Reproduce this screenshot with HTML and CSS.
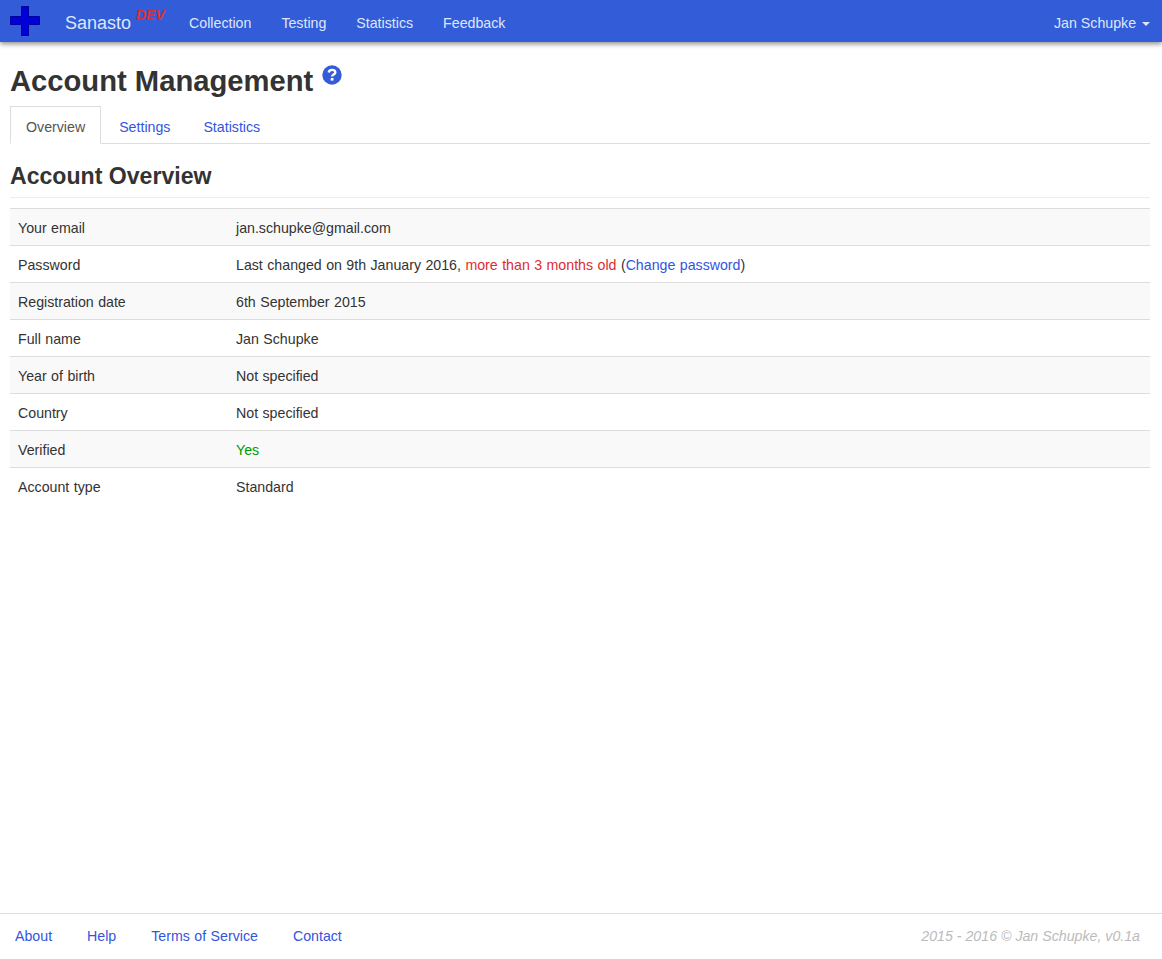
FILE: index.html
```html
<!DOCTYPE html>
<html lang="en">

<head>
    <meta charset="UTF-8">
    <meta name="viewport" content="width=device-width, initial-scale=1.0">
    <title>Account Management</title>
    <link rel="stylesheet" href="styles.css">
</head>

<body>

    <nav class="navbar">
        <a class="logo" href="#">
            <svg width="30" height="30" viewBox="0 0 30 30">
                <path d="M11.500 .5h7v10h11v8h-11v11h-7v-11h-11v-8h11z" fill="#0000d8" stroke="#00009a"/>
            </svg>
        </a>
        <a class="brand" href="#">Sanasto<sup class="dev">DEV</sup></a>
        <ul class="nav-links">
            <li><a href="#">Collection</a></li>
            <li><a href="#">Testing</a></li>
            <li><a href="#">Statistics</a></li>
            <li><a href="#">Feedback</a></li>
        </ul>
        <a class="user" href="#">Jan Schupke <span class="caret"></span></a>
    </nav>

    <main class="content">
        <h1>Account Management
            <a class="help" href="#">
                <svg width="20" height="20" viewBox="0 0 20 20">
                    <circle cx="10" cy="10" r="9.700" fill="#335cd8"/>
                    <path d="M6.700 7.500c.2-1.700 1.500-2.600 3.300-2.600 1.900 0 3.300 1 3.300 2.500 0 2.200-3.200 2.200-3.200 4.200" fill="none" stroke="#fff" stroke-width="2.400"/>
                    <rect x="8.700" y="13" width="2.800" height="2.600" fill="#fff"/>
                </svg>
            </a>
        </h1>

        <ul class="tabs">
            <li class="active"><a href="#">Overview</a></li>
            <li><a href="#">Settings</a></li>
            <li><a href="#">Statistics</a></li>
        </ul>

        <h2>Account Overview</h2>

        <table class="info">
            <tr><td>Your email</td><td>jan.schupke@gmail.com</td></tr>
            <tr><td>Password</td><td>Last changed on 9th January 2016, <span class="old">more than 3 months old</span> (<a href="#">Change password</a>)</td></tr>
            <tr><td>Registration date</td><td>6th September 2015</td></tr>
            <tr><td>Full name</td><td>Jan Schupke</td></tr>
            <tr><td>Year of birth</td><td>Not specified</td></tr>
            <tr><td>Country</td><td>Not specified</td></tr>
            <tr><td>Verified</td><td><span class="yes">Yes</span></td></tr>
            <tr><td>Account type</td><td>Standard</td></tr>
        </table>
    </main>

    <footer>
        <ul class="foot-links">
            <li><a href="#">About</a></li>
            <li><a href="#">Help</a></li>
            <li><a href="#">Terms of Service</a></li>
            <li><a href="#">Contact</a></li>
        </ul>
        <p class="copy">2015 - 2016 © Jan Schupke, v0.1a</p>
    </footer>

</body>
</html>
```

FILE: styles.css
```css
:root {
    --blue: #335cd8;
    --link: #3355dd;
    --text: #333333;
    --border: #dddddd;
}

* {
    box-sizing: border-box;
    margin: 0;
    padding: 0;
}

html, body {
    height: 100%;
}

body {
    display: flex;
    flex-direction: column;
    background: #fff;
    color: var(--text);
    font-family: "Liberation Sans", sans-serif;
    font-size: 14.2px;
    line-height: 20px;
}

a {
    color: var(--link);
    text-decoration: none;
}

ul {
    list-style: none;
}

/* Navbar */
.navbar {
    display: flex;
    align-items: center;
    flex: none;
    height: 42px;
    padding-left: 10px;
    padding-top: 3px;
    background: var(--blue);
    box-shadow: 0 2px 5px rgba(0, 0, 0, 0.45);
}

.navbar a {
    color: #dfe6fa;
}

.logo {
    display: flex;
    align-self: flex-start;
    width: 30px;
    height: 30px;
    margin-top: 3px;
}

.brand {
    margin-left: 25px;
    font-size: 18px;
    position: relative;
}

.dev {
    position: absolute;
    top: -8px;
    left: 71px;
    color: #dd2c33;
    font-size: 14px;
    font-weight: 700;
    font-style: italic;
    line-height: 20px;
}

.nav-links {
    display: flex;
    gap: 30px;
    margin-left: 58px;
}

.user {
    margin-left: auto;
    margin-right: 12px;
}

.caret {
    display: inline-block;
    width: 0;
    height: 0;
    margin-left: 2px;
    vertical-align: middle;
    border-top: 4px solid #dfe6fa;
    border-left: 4px solid transparent;
    border-right: 4px solid transparent;
}

/* Content */
.content {
    flex: 1;
    padding: 0 12px 0 10px;
}

h1 {
    margin-top: 20px;
    font-size: 29.200px;
    font-weight: 700;
    line-height: 39px;
    color: var(--text);
}

.help {
    position: relative;
    top: -8px;
    margin-left: 1px;
}

.help svg {
    vertical-align: middle;
}

.tabs {
    display: flex;
    margin-top: 5px;
    border-bottom: 1px solid var(--border);
}

.tabs li {
    margin-bottom: -1px;
}

.tabs a {
    display: block;
    padding: 10px 15px 6px;
    border: 1px solid transparent;
    margin-right: 1px;
    line-height: 20px;
}

.tabs .active a {
    margin-right: 2px;
    color: #555;
    background: #fff;
    border-color: var(--border) var(--border) #fff;
}

h2 {
    margin-top: 19px;
    padding-bottom: 8px;
    border-bottom: 1px solid #eeeeee;
    font-size: 23.100px;
    font-weight: 700;
    line-height: 26px;
    color: var(--text);
}

.info {
    width: 100%;
    margin-top: 10px;
    border-collapse: collapse;
    word-spacing: 0.5px;
}

.info td {
    padding: 9px 8px 7px;
    border-top: 1px solid var(--border);
    line-height: 20px;
}

.info td:first-child {
    width: 218px;
}

.info tr:nth-child(odd) {
    background: #f9f9f9;
}

.old {
    color: #dd2c33;
}

.yes {
    color: #009900;
}

/* Footer */
footer {
    display: flex;
    justify-content: space-between;
    align-items: center;
    flex: none;
    height: 46px;
    padding: 0 22px 2px 15px;
    border-top: 1px solid var(--border);
}

.foot-links {
    display: flex;
    gap: 35px;
    word-spacing: 0.5px;
}

.copy {
    color: #bbbbbb;
    font-style: italic;
}
```
